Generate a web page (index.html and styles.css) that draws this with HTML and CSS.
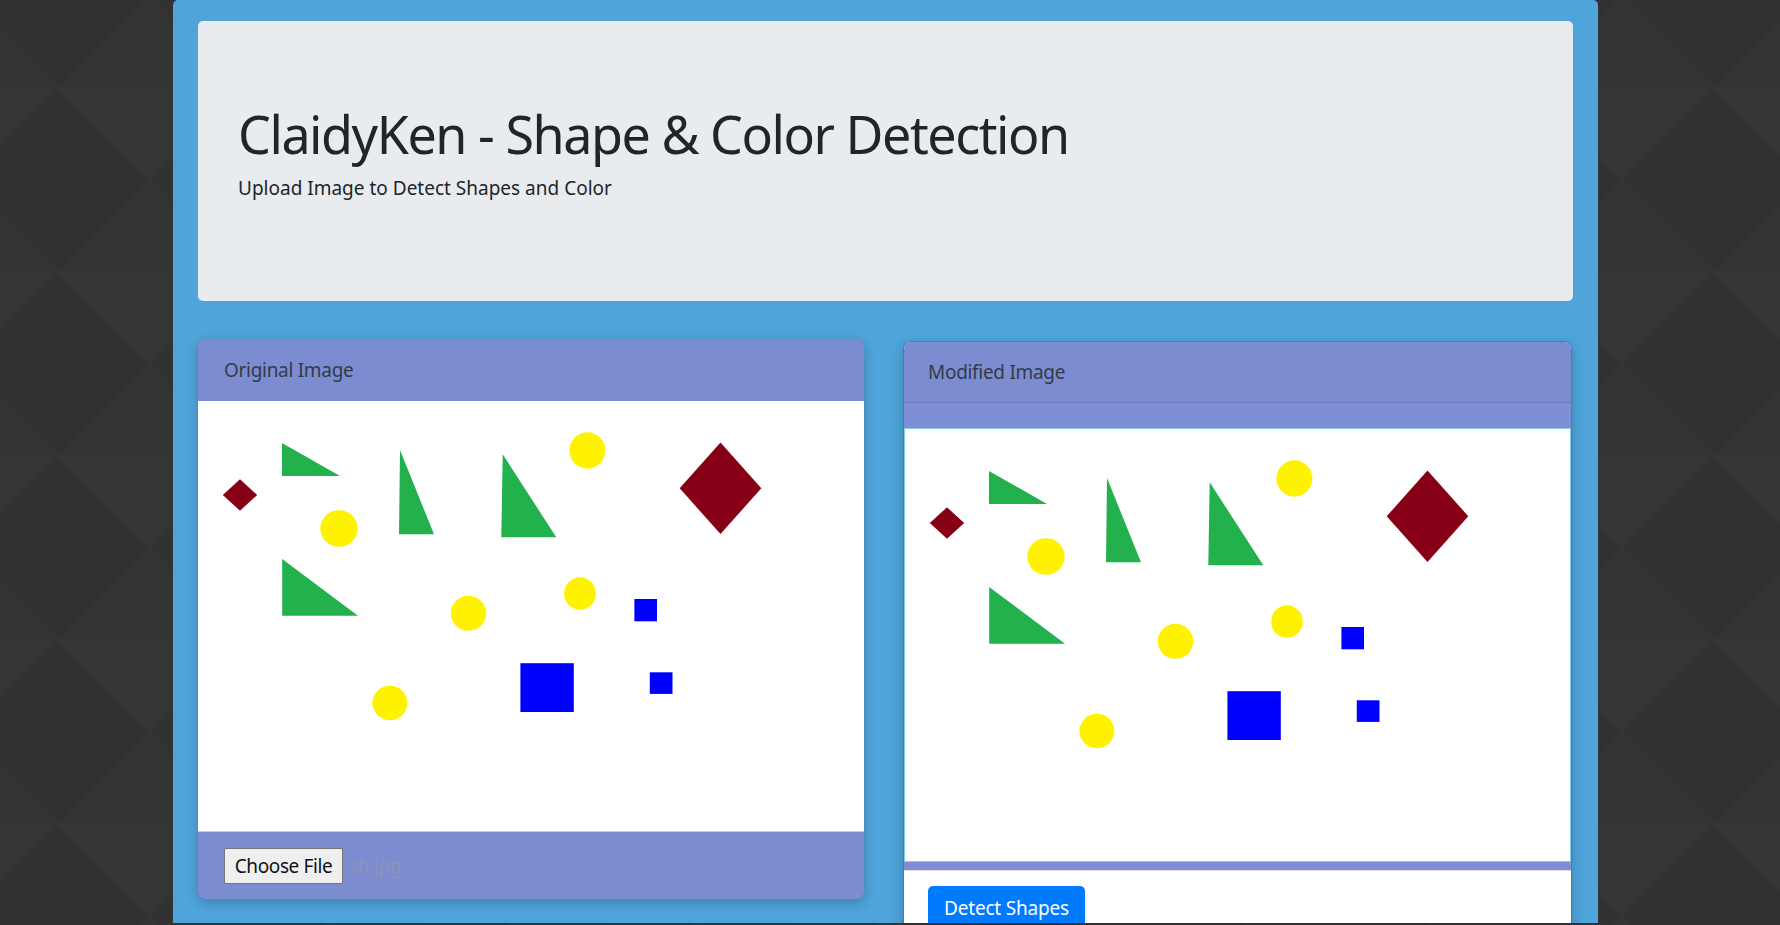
FILE: index.html
```html
<!DOCTYPE html>
<html lang="en">
<head>
<meta charset="utf-8">
<title>ClaidyKen - Shape &amp; Color Detection</title>
<link rel="stylesheet" href="styles.css">
</head>
<body>
<svg class="defs" width="0" height="0" aria-hidden="true">
  <symbol id="shapes" viewBox="0 0 666 430">
    <polygon class="red" points="42,78.3 59.2,94 42,109.7 24.8,94"/>
    <polygon class="green" points="84,42 142,75 84,75"/>
    <polygon class="green" points="202,49 236,133.3 201,133.3"/>
    <polygon class="green" points="304.7,53.3 358.3,136.3 303.3,136.3"/>
    <ellipse class="yellow" cx="389.4" cy="49.5" rx="18" ry="18.2"/>
    <polygon class="red" points="522.5,41.5 563.3,87.3 522.5,133 481.7,87.3"/>
    <ellipse class="yellow" cx="141" cy="127.5" rx="18.7" ry="18.3"/>
    <polygon class="green" points="84.2,158 160,214.7 84.2,214.7"/>
    <ellipse class="yellow" cx="270.5" cy="212.3" rx="17.8" ry="17.5"/>
    <ellipse class="yellow" cx="382" cy="192.5" rx="15.8" ry="16.3"/>
    <rect class="blue" x="436.4" y="198" width="22.6" height="22.3"/>
    <rect class="blue" x="322.4" y="262.2" width="53.4" height="48.8"/>
    <rect class="blue" x="451.8" y="271.3" width="22.7" height="21.6"/>
    <ellipse class="yellow" cx="191.9" cy="302" rx="17.5" ry="17.2"/>
  </symbol>
</svg>
<div class="page">
  <div class="container">
    <div class="jumbotron">
      <h1 class="display">ClaidyKen - Shape &amp; Color Detection</h1>
      <p class="lead">Upload Image to Detect Shapes and Color</p>
    </div>
    <div class="row">
      <div class="card card-original">
        <div class="card-header">Original Image</div>
        <div class="img-wrap">
          <svg class="shape-img" viewBox="0 0 666 430" preserveAspectRatio="xMinYMin meet"><use href="#shapes"/></svg>
        </div>
        <div class="card-footer">
          <span class="file-btn">Choose File</span>
          <span class="file-name">sh.jpg</span>
        </div>
      </div>
      <div class="card card-modified">
        <div class="card-header header-border">Modified Image</div>
        <div class="band"></div>
        <div class="img-wrap bordered">
          <svg class="shape-img" viewBox="0 0 666 430" preserveAspectRatio="xMinYMin meet"><use href="#shapes"/></svg>
        </div>
        <div class="band thin"></div>
        <div class="card-body">
          <span class="btn-primary">Detect Shapes</span>
        </div>
      </div>
    </div>
  </div>
</div>
</body>
</html>
```

FILE: styles.css
```css
* { box-sizing: border-box; }

html, body {
  margin: 0;
  padding: 0;
}

body {
  background-color: #333333;
  background-image:
    conic-gradient(from -45deg at 50% 50%, #353535 0deg 90deg, #323232 90deg 180deg, #343434 180deg 270deg, #313131 270deg 360deg),
    conic-gradient(from 45deg at 50% 50%, #303030 0deg 90deg, #363636 90deg 180deg, #313131 180deg 270deg, #353535 270deg 360deg);
  background-size: 184px 184px, 92px 92px;
  background-position: 57px 88px, 57px 88px;
  font-family: "Noto Sans", "Open Sans", sans-serif;
  color: #212529;
  overflow: hidden;
}

.defs {
  position: absolute;
  width: 0;
  height: 0;
}

.page {
  height: 923px;
  overflow: hidden;
}

.container {
  width: 1425px;
  height: 923px;
  margin-left: 173px;
  background: #4fa4da;
  border-radius: 5px 5px 0 0;
  padding: 21px 25px 0;
}

.jumbotron {
  height: 280px;
  background: #e9ecef;
  border-radius: 5px;
  padding: 82px 40px 0 40px;
}

.display {
  margin: 0;
  font-size: 52px;
  font-weight: 400;
  line-height: 62px;
  letter-spacing: -1.45px;
  color: #212529;
}

.lead {
  margin: 8px 0 0;
  font-size: 19px;
  font-weight: 400;
  line-height: 30px;
  letter-spacing: 0;
  color: #212529;
}

.row {
  display: grid;
  grid-template-columns: 666px 669px;
  column-gap: 39px;
  margin-top: 38px;
  align-items: start;
}

.card {
  border-radius: 8px;
  overflow: hidden;
  box-shadow: 0 4px 12px rgba(0, 0, 0, 0.22);
}

.card-original {
  background: #7b8cd0;
}

.card-modified {
  margin-top: 2px;
  background: #ffffff;
  border: 1px solid #4b79bd;
  border-bottom: none;
}

.card-header {
  height: 62px;
  background: #7b8cd0;
  padding-left: 26px;
  display: flex;
  align-items: center;
  font-size: 19px;
  letter-spacing: -0.3px;
  color: #343a48;
}

.card-modified .card-header {
  padding-left: 24px;
  height: 61px;
}

.header-border {
  border-bottom: 1px solid #6a7bbf;
}

.band {
  height: 25px;
  background: #7f8fd5;
}

.band.thin {
  height: 9px;
  border-bottom: 1px solid #dcdfe8;
}

.img-wrap {
  background: #ffffff;
  height: 430px;
}

.img-wrap.bordered {
  height: 434px;
  border: 1px solid #86cdea;
}

.shape-img {
  display: block;
  width: 666px;
  height: 430px;
}

.red { fill: #880015; }
.green { fill: #22b14c; }
.yellow { fill: #fff200; }
.blue { fill: #0000ff; }

.card-footer {
  height: 68px;
  background: #7b8cd0;
  border-top: 1px solid #c7cde8;
  padding: 16px 0 0 26px;
  display: flex;
  align-items: flex-start;
}

.file-btn {
  display: inline-flex;
  align-items: center;
  justify-content: center;
  width: 119px;
  height: 36px;
  background: #efefef;
  border: 1px solid #767676;
  border-radius: 2px;
  font-size: 19px;
  letter-spacing: -0.4px;
  color: #111111;
}

.file-name {
  margin-left: 6px;
  line-height: 36px;
  font-size: 19px;
  letter-spacing: -0.3px;
  color: #8d93b6;
}

.card-body {
  padding: 15px 0 0 24px;
  height: 200px;
}

.btn-primary {
  display: inline-block;
  width: 157px;
  height: 48px;
  padding-top: 7px;
  text-align: center;
  background: #007bff;
  border-radius: 5px;
  color: #ffffff;
  font-size: 19px;
  letter-spacing: -0.2px;
  line-height: 30px;
}
```
